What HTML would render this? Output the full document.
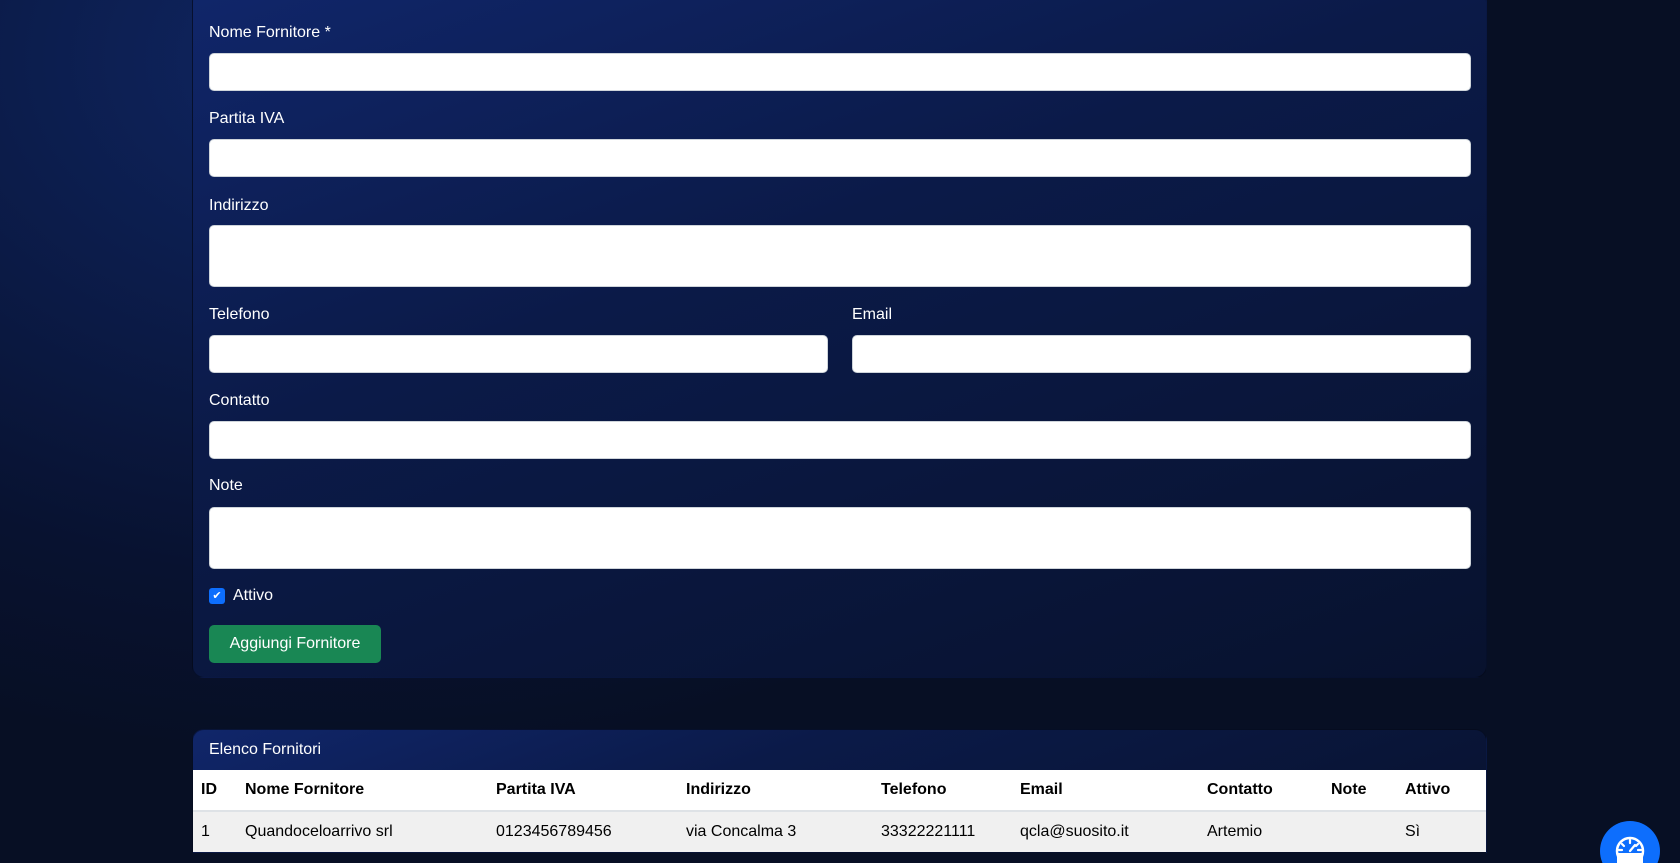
<!DOCTYPE html>
<html style="background:#070f24"><head><style>
*{box-sizing:border-box;margin:0;padding:0}
html,body{width:1680px;height:863px;overflow:hidden}
body{font-family:"Liberation Sans",sans-serif;color:#fff;position:relative;
background:radial-gradient(ellipse 1000px 700px at 350px 60px,#0f2663 0%,#0b1a45 45%,#081230 75%,#070f24 100%) no-repeat;background-size:1680px 863px;background-color:#070f24}
.card{position:absolute;left:192px;width:1295px;border:1px solid rgba(0,0,0,.35);border-radius:12px;
background:linear-gradient(160deg,#10266a 0%,#0b1a48 40%,#08122e 100%)}
label{position:absolute;font-size:16px;color:#fff}
.in{position:absolute;background:#fff;border:1px solid #ced4da;border-radius:5px}
table{border-collapse:collapse;width:100%}
th,td{text-align:left;color:#000;font-size:16px;padding:0;height:41px}
th{font-weight:bold;background:#fff;border-bottom:2px solid #dee2e6}
td{background:#f0f0f0}
</style></head><body>
<div class="card" style="top:-10px;height:688px"></div>
<label style="left:209px;top:24px">Nome Fornitore *</label>
<div class="in" style="left:209px;top:53px;width:1262px;height:38px"></div>
<label style="left:209px;top:110px">Partita IVA</label>
<div class="in" style="left:209px;top:139px;width:1262px;height:38px"></div>
<label style="left:209px;top:197px">Indirizzo</label>
<div class="in" style="left:209px;top:225px;width:1262px;height:62px"></div>
<label style="left:209px;top:306px">Telefono</label>
<label style="left:852px;top:306px">Email</label>
<div class="in" style="left:209px;top:335px;width:619px;height:38px"></div>
<div class="in" style="left:852px;top:335px;width:619px;height:38px"></div>
<label style="left:209px;top:392px">Contatto</label>
<div class="in" style="left:209px;top:421px;width:1262px;height:38px"></div>
<label style="left:209px;top:477px">Note</label>
<div class="in" style="left:209px;top:507px;width:1262px;height:62px"></div>
<div style="position:absolute;left:209px;top:588px;width:16px;height:16px;background:#0d6efd;border-radius:3px;color:#fff;font-size:11px;line-height:16px;text-align:center">✔</div>
<label style="left:233px;top:587px">Attivo</label>
<div style="position:absolute;left:209px;top:625px;width:172px;height:38px;background:#198754;border-radius:5px;font-size:16px;line-height:38px;text-align:center">Aggiungi Fornitore</div>
<div class="card" style="top:729px;height:124px;overflow:hidden;border-radius:12px 12px 0 0">
<div style="height:40px;padding:11px 0 0 16px;font-size:16px">Elenco Fornitori</div>
<table>
<colgroup><col style="width:52px"><col style="width:251px"><col style="width:190px"><col style="width:195px"><col style="width:139px"><col style="width:187px"><col style="width:124px"><col style="width:74px"><col></colgroup>
<tr><th style="padding-left:8px">ID</th><th>Nome Fornitore</th><th>Partita IVA</th><th>Indirizzo</th><th>Telefono</th><th>Email</th><th>Contatto</th><th>Note</th><th>Attivo</th></tr>
<tr><td style="padding-left:8px">1</td><td>Quandoceloarrivo srl</td><td>0123456789456</td><td>via Concalma 3</td><td>33322221111</td><td>qcla@suosito.it</td><td>Artemio</td><td></td><td>Sì</td></tr>
</table></div>
<div style="position:absolute;left:1600px;top:821px;width:60px;height:60px;border-radius:50%;background:#0d6efd">
<svg width="60" height="60" viewBox="0 0 60 60" style="position:absolute;left:0;top:0"><circle cx="30" cy="30" r="13" fill="none" stroke="#fff" stroke-width="2.5"/><path d="M17 32h26v11H17z" fill="#fff"/><path d="M30 30l5-6M30 19v3M22 23l2 2M38 23l-2 2M19 29h3M41 29h-3" stroke="#fff" stroke-width="2.2" stroke-linecap="round"/></svg></div>
</body></html>
